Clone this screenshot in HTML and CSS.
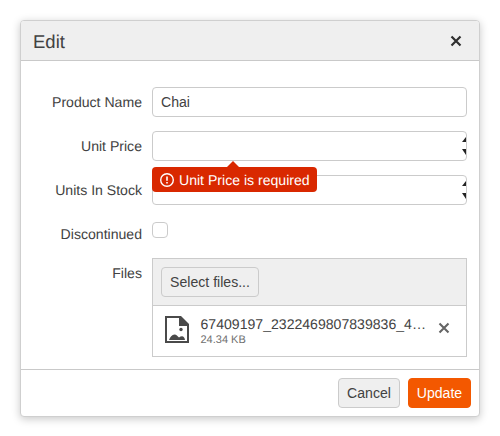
FILE: index.html
```html
<!DOCTYPE html>
<html lang="en">
<head>
<meta charset="utf-8">
<title>Edit</title>
<link rel="stylesheet" href="styles.css">
</head>
<body>
<div class="window">
  <div class="titlebar">
    <span class="title">Edit</span>
    <svg class="close" width="12" height="12" viewBox="0 0 12 12"><path d="M1.5 1.5l9 9M10.5 1.5l-9 9" stroke="#2f2f2f" stroke-width="2.2" fill="none"/></svg>
  </div>
  <div class="content">
    <div class="row">
      <label class="label">Product Name</label>
      <div class="field"><input class="input" type="text" value="Chai"></div>
    </div>
    <div class="row">
      <label class="label">Unit Price</label>
      <div class="field">
        <div class="input numeric"><span class="spin"><i class="up"></i><i class="down"></i></span></div>
        <div class="tip">
          <span class="tip-arrow"></span>
          <svg class="tip-icon" width="16" height="16" viewBox="0 0 16 16"><circle cx="8" cy="8" r="6.3" fill="none" stroke="#fff" stroke-width="1.4"/><path d="M8 4.4v4.400M8 9.900v1.700" stroke="#fff" stroke-width="1.600" fill="none"/></svg>
          <span>Unit Price is required</span>
        </div>
      </div>
    </div>
    <div class="row">
      <label class="label">Units In Stock</label>
      <div class="field"><div class="input numeric"><span class="spin"><i class="up"></i><i class="down"></i></span></div></div>
    </div>
    <div class="row row-check">
      <label class="label">Discontinued</label>
      <div class="field"><span class="checkbox"></span></div>
    </div>
    <div class="row row-files">
      <label class="label">Files</label>
      <div class="field upload">
        <div class="upload-bar"><button class="btn btn-select" type="button">Select files...</button></div>
        <div class="file">
          <svg class="file-icon" width="32" height="32" viewBox="0 0 32 32"><path fill="#4a4a4a" fill-rule="evenodd" d="M4 1h16l8 8v19H4zM6 3v23h20V11h-8V3z"/><path fill="#4a4a4a" d="M19.500 1.500l8 8h-8z"/><circle cx="20" cy="14.500" r="1.700" fill="#4a4a4a"/><path fill="#4a4a4a" d="M8 25c1-3 3-5.500 5.500-5.500 2 0 3 1.500 4.500 3 1-.8 2-1.200 3-1.200 1.500 0 2.500 1.200 3 3.700z"/></svg>
          <div class="file-info">
            <div class="file-name">67409197_2322469807839836_4…</div>
            <div class="file-size">24.34 KB</div>
          </div>
          <svg class="file-remove" width="12" height="12" viewBox="0 0 12 12"><path d="M1.500 1.500l9 9M10.500 1.500l-9 9" stroke="#656565" stroke-width="2.100" fill="none"/></svg>
        </div>
      </div>
    </div>
  </div>
  <div class="actions">
    <button class="btn btn-cancel" type="button">Cancel</button>
    <button class="btn btn-update primary" type="button">Update</button>
  </div>
</div>
</body>
</html>
```
FILE: styles.css
```css
* { box-sizing: border-box; }
html, body { margin: 0; padding: 0; background: #fff; }
body {
  padding: 20px;
  font-family: "Liberation Sans", Arial, sans-serif;
  font-size: 14.08px;
  color: #424242;
  text-rendering: geometricPrecision;
}
.window {
  width: 460px;
  height: 397px;
  display: flex;
  flex-direction: column;
  background: #fff;
  border: 1px solid #cfcfcf;
  border-radius: 4px;
  box-shadow: 0 2px 8px rgba(0, 0, 0, 0.22);
}
.titlebar {
  flex: none;
  height: 40px;
  display: flex;
  align-items: center;
  justify-content: space-between;
  padding: 0 17px 0 12px;
  background: #efefef;
  border-bottom: 1px solid #c9c9c9;
  border-radius: 3px 3px 0 0;
}
.title { font-size: 18.5px; color: #424242; padding-top: 2px; }
.content {
  flex: 1;
  padding: 26px 12px 12px 0;
  display: flex;
  flex-direction: column;
  gap: 14px;
  border-bottom: 1px solid #c9c9c9;
}
.row { display: flex; gap: 10px; align-items: center; }
.label { flex: none; width: 121px; text-align: right; }
.field { flex: 1; position: relative; min-width: 0; }
.input {
  display: block;
  width: 100%;
  height: 30px;
  padding: 0 8px;
  border: 1px solid #cbcbcb;
  border-radius: 4px;
  background: #fff;
  font: inherit;
  color: #424242;
  outline: none;
}
.numeric { position: relative; }
.spin {
  position: absolute;
  right: 0;
  top: 0;
  bottom: 0;
  display: flex;
  flex-direction: column;
  justify-content: center;
  gap: 7px;
  align-items: flex-end;
}
.spin i { display: block; width: 0; height: 0; border-left: 4px solid transparent; }
.spin .up { border-bottom: 5px solid #222; }
.spin .down { border-top: 6px solid #222; }
.tip {
  position: absolute;
  z-index: 2;
  left: 0;
  top: 36px;
  height: 25px;
  width: 165px;
  display: flex;
  align-items: center;
  gap: 4px;
  padding: 0 7px;
  background: #d92800;
  color: #fff;
  border-radius: 4px;
  white-space: nowrap;
}
.tip-arrow {
  position: absolute;
  left: 75px;
  top: -6px;
  width: 0;
  height: 0;
  border-left: 6px solid transparent;
  border-right: 6px solid transparent;
  border-bottom: 6px solid #d92800;
}
.tip-icon { flex: none; }
.row-check { height: 17px; margin-top: 3px; align-items: flex-start; }
.row-check .label { line-height: 24px; }
.checkbox {
  display: block;
  width: 16px;
  height: 16px;
  border: 1px solid #cbcbcb;
  border-radius: 4px;
  background: #fff;
}
.row-files { align-items: flex-start; margin-top: 5px; }
.row-files .label { padding-top: 7px; }
.upload { border: 1px solid #cbcbcb; background: #fff; height: 99px; }
.upload-bar {
  height: 47px;
  padding: 8px;
  background: #efefef;
  border-bottom: 1px solid #cbcbcb;
}
.btn {
  height: 30px;
  padding: 0;
  border: 1px solid #cbcbcb;
  border-radius: 4px;
  background: #efefef;
  font: inherit;
  color: #424242;
}
.btn-select { width: 98px; }
.btn-cancel { width: 62px; }
.btn-update { width: 63px; }
.primary { background: #f35800; border-color: #f35800; color: #fff; }
.file {
  display: flex;
  align-items: center;
  padding: 8px 16px 8px 8px;
  height: 50px;
}
.file-icon { flex: none; margin-right: 7.500px; }
.file-info { flex: 1; min-width: 0; }
.file-name { white-space: nowrap; line-height: 17px; }
.file-size { font-size: 11px; line-height: 12px; margin-top: 1px; color: #6f6f6f; }
.file-remove { flex: none; margin: 0 0 6px 10px; }
.actions {
  flex: none;
  height: 46px;
  padding: 8px 8px 0 0;
  display: flex;
  justify-content: flex-end;
  gap: 8px;
}
```
